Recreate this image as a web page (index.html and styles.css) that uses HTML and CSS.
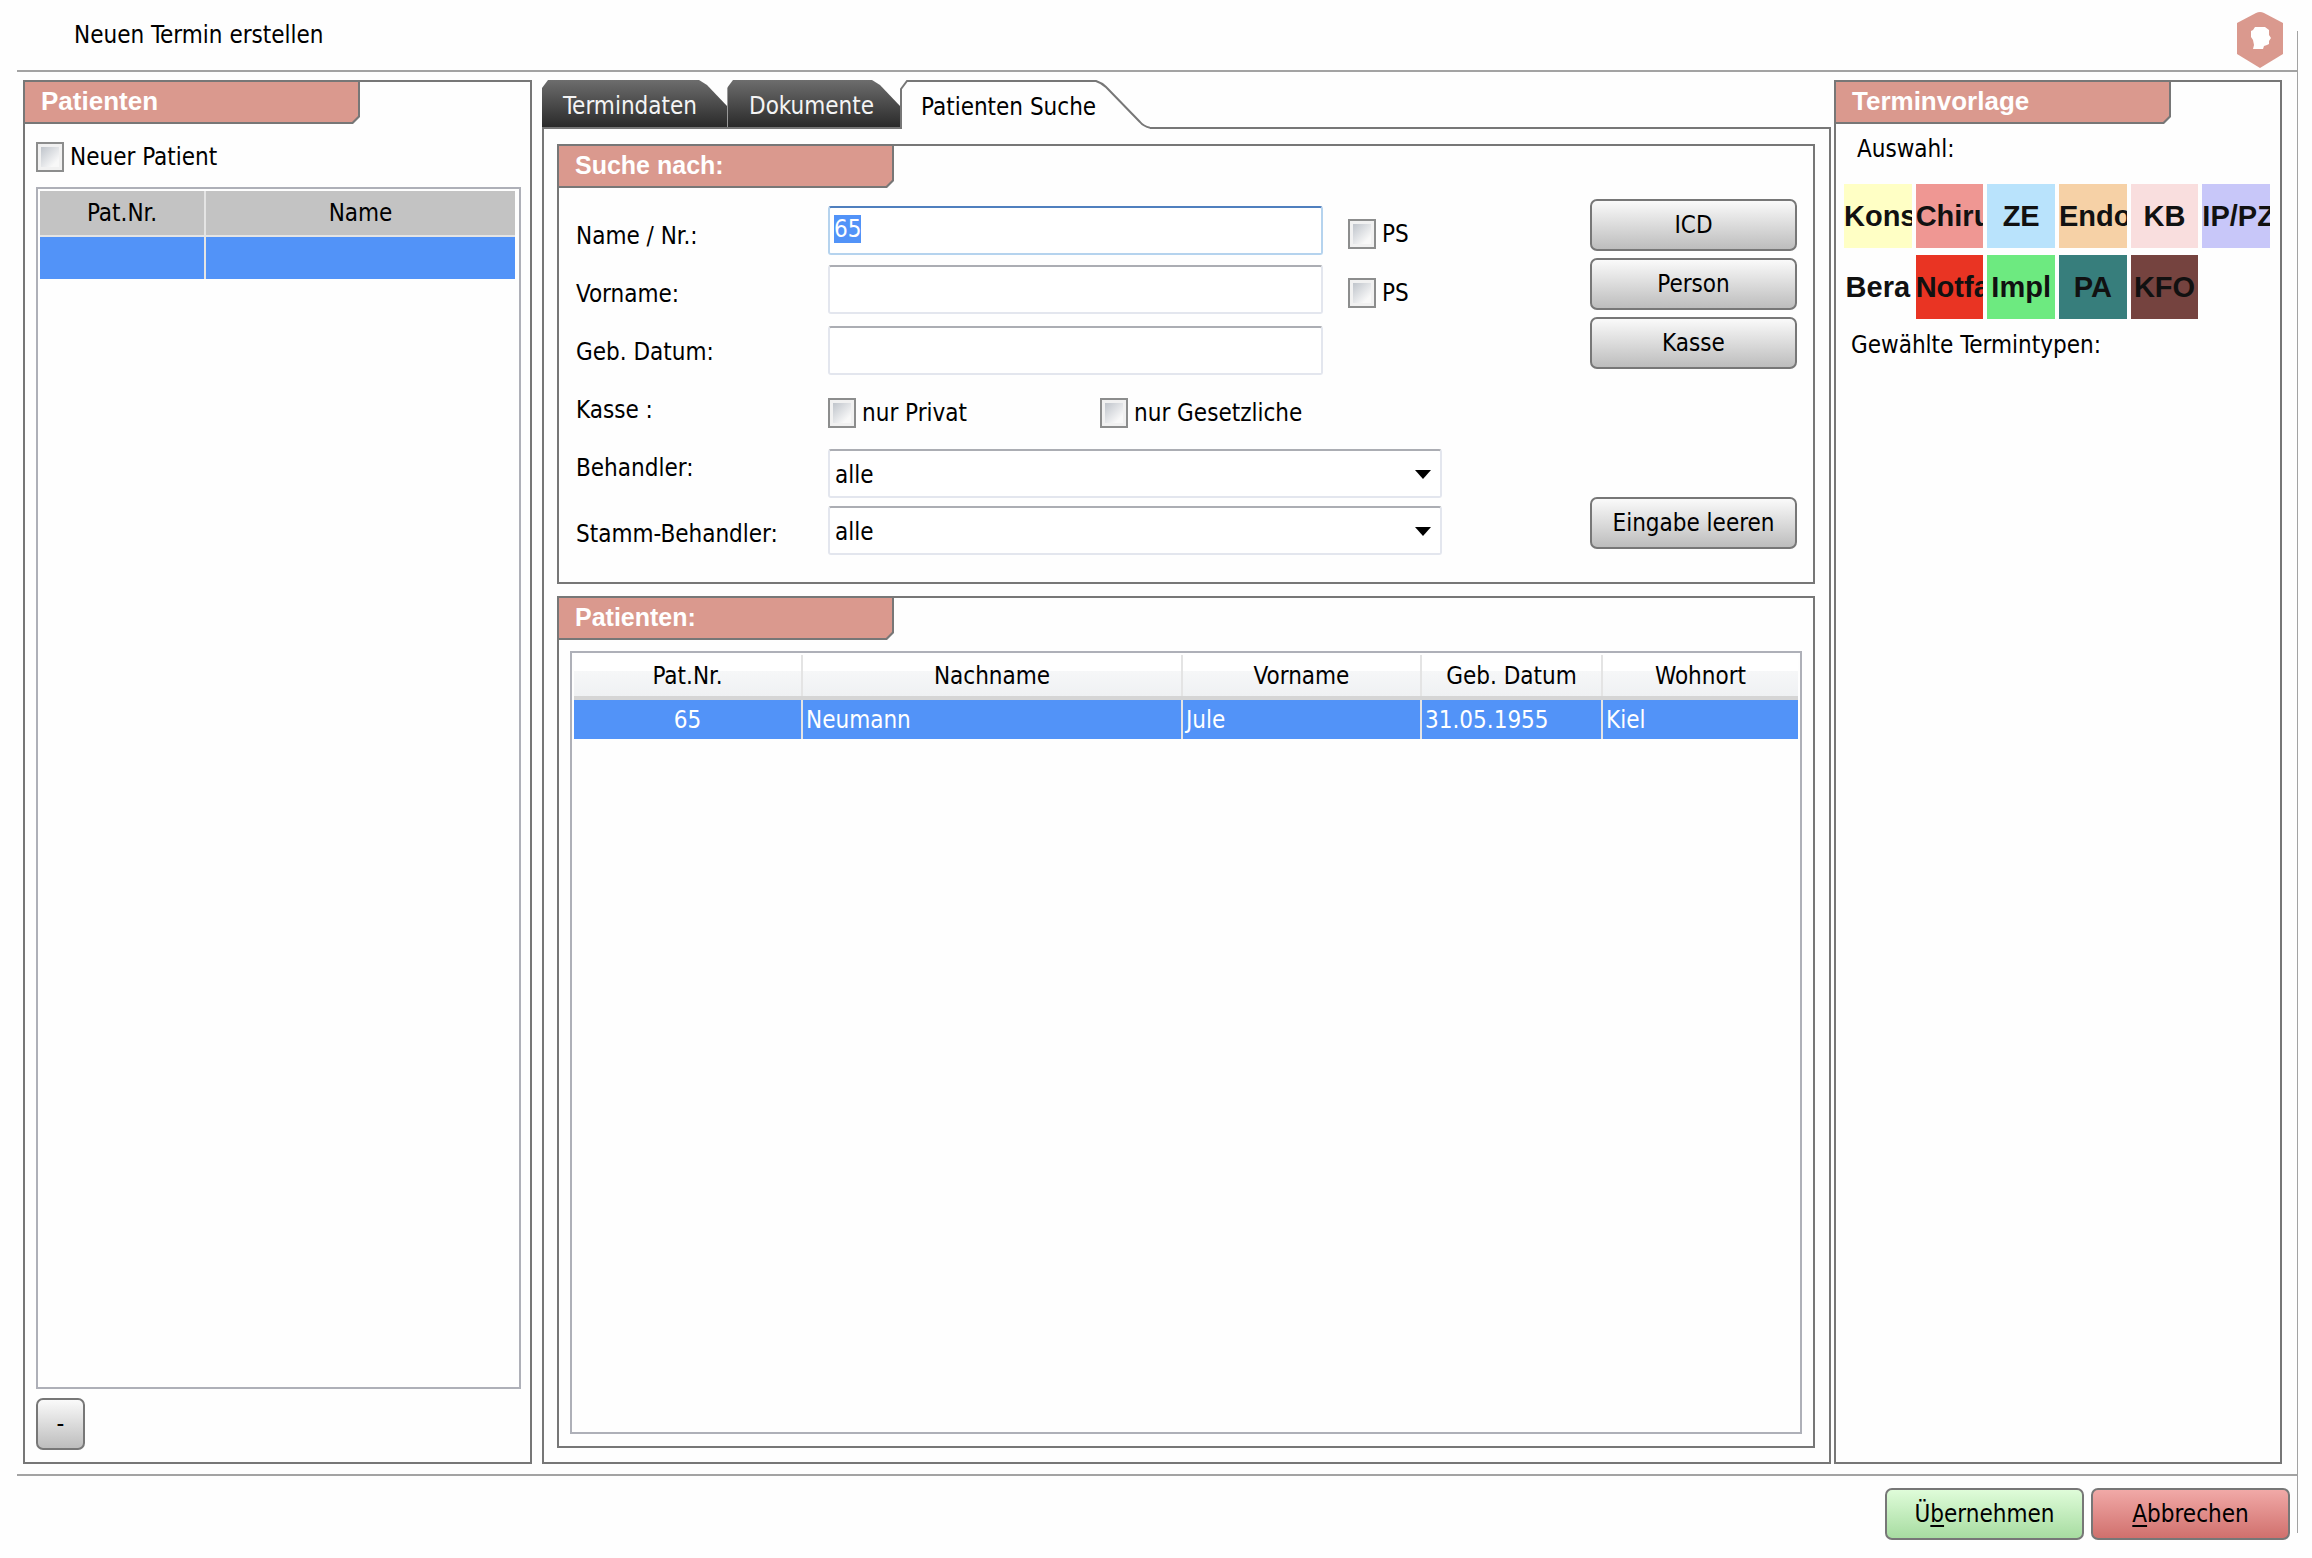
FILE: index.html
```html
<!DOCTYPE html>
<html lang="de">
<head>
<meta charset="utf-8">
<title>Neuen Termin erstellen</title>
<link rel="stylesheet" href="styles.css">
</head>
<body>
<div class="window">
  <header class="window-head">
    <h1 class="window-title">Neuen Termin erstellen</h1>
    <svg class="logo" width="48" height="56" viewBox="0 0 48 56" aria-hidden="true">
      <path fill="#da998e" d="M20 1Q24 -1 28 1L47 11V42L24 56L1 42V11Z"/>
      <path fill="#fff" d="M19 15h10l4 3v5l2 3-2 3v3l-2 1-3 1-1 3H17l1-4-1-5-2-3V19l2-1Z"/>
    </svg>
  </header>

  <main class="columns">
    <section class="panel side patients">
      <h2 class="panel-title"><span>Patienten</span></h2>
      <div class="patients-body">
        <label class="check"><input type="checkbox">Neuer Patient</label>
        <div class="frame">
          <table class="grid chosen">
            <colgroup><col class="chosen-nr"><col></colgroup>
            <thead><tr><th>Pat.Nr.</th><th>Name</th></tr></thead>
            <tbody><tr><td></td><td></td></tr></tbody>
          </table>
        </div>
        <button class="btn btn-minus" type="button">-</button>
      </div>
    </section>

    <div class="center">
      <div class="tabs" role="tablist">
        <button class="tab tab-first" type="button" role="tab">Termindaten</button>
        <button class="tab tab-second" type="button" role="tab">Dokumente</button>
        <button class="tab tab-active" type="button" role="tab" aria-selected="true">
          <svg class="tab-shape" width="250" height="49" viewBox="0 0 250 49" aria-hidden="true">
            <path fill="#fefefe" d="M1 49V9L7 1H196Q202 3 206 7L240 42Q244 47 250 48V49Z"/>
            <path fill="none" stroke="#777" stroke-width="2" d="M1 49V9L7 1H196Q202 3 206 7L240 42Q244 47 252 48"/>
          </svg>
          <span class="tab-text">Patienten Suche</span>
        </button>
      </div>
      <div class="tab-body">
        <section class="panel">
          <h2 class="panel-title"><span>Suche nach:</span></h2>
          <form class="search">
            <div class="labels">
              <label for="name">Name / Nr.:</label>
              <label for="vorname">Vorname:</label>
              <label for="geb">Geb. Datum:</label>
              <span>Kasse :</span>
              <label for="behandler">Behandler:</label>
              <label for="stamm">Stamm-Behandler:</label>
            </div>
            <div class="fields">
              <div class="field">
                <input class="text" id="name" type="text" value="65" autofocus>
                <label class="check"><input type="checkbox">PS</label>
              </div>
              <div class="field">
                <input class="text" id="vorname" type="text">
                <label class="check"><input type="checkbox">PS</label>
              </div>
              <div class="field"><input class="text" id="geb" type="text"></div>
              <div class="field kasse">
                <label class="check"><input type="checkbox">nur Privat</label>
                <label class="check"><input type="checkbox">nur Gesetzliche</label>
              </div>
              <div class="field"><span class="select"><select id="behandler"><option>alle</option></select></span></div>
              <div class="field"><span class="select"><select id="stamm"><option>alle</option></select></span></div>
            </div>
            <div class="actions">
              <button class="btn" type="button">ICD</button>
              <button class="btn" type="button">Person</button>
              <button class="btn" type="button">Kasse</button>
              <button class="btn btn-clear" type="reset">Eingabe leeren</button>
            </div>
          </form>
        </section>

        <section class="panel results">
          <h2 class="panel-title"><span>Patienten:</span></h2>
          <div class="frame">
            <table class="grid found">
              <colgroup><col class="c-nr"><col class="c-last"><col class="c-first"><col class="c-date"><col class="c-city"></colgroup>
              <thead><tr><th>Pat.Nr.</th><th>Nachname</th><th>Vorname</th><th>Geb. Datum</th><th>Wohnort</th></tr></thead>
              <tbody><tr><td class="nr">65</td><td>Neumann</td><td>Jule</td><td>31.05.1955</td><td>Kiel</td></tr></tbody>
            </table>
          </div>
        </section>
      </div>
    </div>

    <section class="panel side templates">
      <h2 class="panel-title"><span>Terminvorlage</span></h2>
      <p class="pick">Auswahl:</p>
      <div class="tiles">
        <button type="button" class="tile kons">Kons</button>
        <button type="button" class="tile chir">Chiru</button>
        <button type="button" class="tile ze">ZE</button>
        <button type="button" class="tile endo">Endo</button>
        <button type="button" class="tile kb">KB</button>
        <button type="button" class="tile ip">IP/PZ</button>
        <button type="button" class="tile bera">Bera</button>
        <button type="button" class="tile notf">Notfa</button>
        <button type="button" class="tile impl">Impl</button>
        <button type="button" class="tile pa">PA</button>
        <button type="button" class="tile kfo">KFO</button>
      </div>
      <p class="types">Gewählte Termintypen:</p>
    </section>
  </main>

  <footer class="window-foot">
    <button class="btn btn-ok" type="button"><span>Ü<u>b</u>ernehmen</span></button>
    <button class="btn btn-cancel" type="button"><span><u>A</u>bbrechen</span></button>
  </footer>
</div>
<script src="app.js"></script>
</body>
</html>
```
FILE: app.js
```js
// Start with the search term selected, ready to be overwritten.
const nameField = document.getElementById("name");
nameField.focus();
nameField.select();
```
FILE: styles.css
```css
:root {
  --line: #777;
  --rule: #a3a3a3;
  --accent: #da998e;
  --blue: #5293f8;
  --ui: "DejaVu Sans Condensed", "Roboto", sans-serif;
  --head: "Liberation Sans", Arial, sans-serif;
}

* { box-sizing: border-box; }

body {
  margin: 0;
  background: #fefefe;
  color: #000;
  font: 24px/28px var(--ui);
}

h1, h2, p { margin: 0; font-weight: normal; }

button, input, select { font: inherit; color: inherit; }

/* window */
.window {
  display: flex;
  flex-direction: column;
  min-height: 100vh;
  margin: 0 14px 0 17px;
  background: linear-gradient(var(--rule), var(--rule)) right 31px / 1px calc(100% - 56px) no-repeat;
}

.window-head {
  display: flex;
  justify-content: space-between;
  align-items: center;
  height: 72px;
  padding: 0 14px 0 57px;
  border-bottom: 2px solid var(--rule);
}

.window-title { font-size: 24px; }
.logo { margin-top: 10px; }

.columns {
  flex: 1;
  display: flex;
  padding: 8px 16px 10px 6px;
}

.window-foot {
  display: flex;
  justify-content: flex-end;
  gap: 7px;
  padding: 12px 8px 18px;
  border-top: 2px solid var(--rule);
}

/* panels */
.panel {
  display: flex;
  flex-direction: column;
  border: 2px solid var(--line);
}

.panel-title {
  width: 335px;
  height: 42px;
  padding: 0 2px 2px 0;
  background: var(--line);
  clip-path: polygon(0 0, 100% 0, 100% calc(100% - 7px), calc(100% - 7px) 100%, 0 100%);
  font: bold 25px/38px var(--head);
  color: #fff;
}

.side .panel-title { font-size: 26px; }

.panel-title span {
  display: block;
  height: 40px;
  padding-left: 16px;
  background: var(--accent);
  clip-path: polygon(0 0, 100% 0, 100% calc(100% - 6px), calc(100% - 6px) 100%, 0 100%);
}

.patients { width: 509px; margin-right: 10px; }
.center { flex: 1; display: flex; flex-direction: column; margin-right: 3px; }
.templates { width: 448px; }

.patients-body {
  flex: 1;
  display: flex;
  flex-direction: column;
  align-items: flex-start;
  padding: 18px 9px 12px 11px;
}

.patients-body .frame { align-self: stretch; margin: 15px 0 9px; padding-right: 4px; }

/* lists */
.frame {
  flex: 1;
  padding: 2px;
  border: 2px solid #aeb0b8;
}

.grid { width: 100%; table-layout: fixed; border-collapse: collapse; }
.grid th { font-weight: normal; padding: 0; }
.grid td { padding: 0 0 0 3px; background: var(--blue); color: #fff; }
.grid th + th, .grid td + td { border-left: 2px solid #e4e4e4; }

.chosen-nr { width: 165px; }
.chosen th { height: 45px; background: #c3c3c3; border-bottom: 2px solid #e4e4e4; }
.chosen td { height: 43px; }

.c-nr { width: 228px; }
.c-first { width: 239px; }
.c-date { width: 181px; }
.c-city { width: 196px; }
.found th {
  height: 43px;
  background: linear-gradient(#fff 16px, #f6f7f8 16px, #eff1f3);
  border-bottom: 4px solid #d5d5d5;
}
.found td { height: 41px; }
.found .nr { text-align: center; padding: 0; }

/* controls */
.check { display: flex; align-items: center; gap: 6px; height: 30px; }

.check input {
  appearance: none;
  width: 28px;
  height: 30px;
  margin: 0;
  padding: 3px;
  border: 2px solid #8c8d8d;
  background: linear-gradient(135deg, #bfc4cb, #f8f8f8 80%) content-box, #f1f1f1;
}

.btn {
  width: 207px;
  height: 52px;
  padding: 0;
  border: 2px solid var(--line);
  border-radius: 7px;
  background: linear-gradient(#fafafa, #bdbdbd);
}

.btn-minus { width: 49px; }
.btn-ok { width: 199px; background: linear-gradient(#dffcd9, #a7dca1); }
.btn-cancel { width: 199px; background: linear-gradient(#f1a9a7, #d0706d); }
.btn u { text-decoration-thickness: 2px; text-underline-offset: 3px; }

/* tabs */
.tabs { display: flex; height: 47px; }

.tab {
  height: 47px;
  padding: 4px 0 0 21px;
  border: 0;
  text-align: left;
  color: #f4f4f4;
  background: linear-gradient(#6d6d6d, #2a2a2a);
  clip-path: polygon(0 8px, 6px 0, calc(100% - 28px) 0, calc(100% - 20px) 5px, 100% 26px, 100% 100%, 0 100%);
}

.tab-first { width: 185px; }
.tab-second { width: 173px; border-left: 1px solid #999; }

.tab-active {
  position: relative;
  width: 250px;
  height: 49px;
  background: none;
  clip-path: none;
  color: #000;
}

.tab-shape { position: absolute; left: 0; top: 0; }
.tab-text { position: relative; }

.tab-body {
  flex: 1;
  display: flex;
  flex-direction: column;
  gap: 12px;
  padding: 15px 14px 14px 13px;
  border: 2px solid var(--line);
}

/* search form */
.search { display: flex; padding: 11px 16px 11px 17px; }

.labels {
  display: grid;
  grid-template-rows: repeat(5, 58px) 74px;
  align-items: center;
  width: 252px;
  padding-top: 8px;
}

.fields {
  flex: 1;
  display: grid;
  grid-template-rows: 59px 59px 63px 61px 61px 53px;
  align-content: start;
  padding-top: 2px;
}

.field { display: flex; align-items: center; gap: 25px; }
.field .text + .check { padding-top: 6px; }
.kasse .check { width: 247px; }

.text {
  width: 495px;
  height: 49px;
  padding: 0 4px 4px;
  border: 2px solid #e3e6ee;
  border-top-color: #abadb3;
  border-radius: 3px;
  background: #fff;
}

.text:focus {
  outline: 0;
  border-color: #b5d3ee;
  border-top-color: #4f7fbe;
}

.text::selection { background: var(--blue); color: #fff; }

.select { position: relative; width: 614px; }

.select select {
  appearance: none;
  display: block;
  width: 100%;
  height: 49px;
  padding: 2px 5px 0;
  border: 2px solid #e3e6ee;
  border-top-color: #abadb3;
  border-radius: 3px;
  background: #fff;
}

.select::after {
  content: "";
  position: absolute;
  right: 11px;
  top: 21px;
  border: 8px solid transparent;
  border-top: 9px solid #000;
  border-bottom: 0;
  pointer-events: none;
}

.actions { display: flex; flex-direction: column; gap: 7px; }
.btn-clear { margin-top: auto; margin-bottom: 22px; }

.results { flex: 1; }
.results .frame { margin: 11px 11px 12px; }

/* appointment templates */
.pick { padding: 11px 0 0 21px; }

.tiles {
  display: grid;
  grid-template-columns: repeat(6, 1fr);
  gap: 7px 4px;
  padding: 21px 10px 12px 8px;
}

.tile {
  display: flex;
  align-items: center;
  justify-content: safe center;
  min-width: 0;
  height: 64px;
  padding: 0;
  border: 0;
  overflow: hidden;
  font: bold 29px/32px var(--head);
  color: #111;
  white-space: nowrap;
}

.kons { background: #ffffc5; }
.chir { background: #ef9793; }
.ze { background: #b9e3fc; }
.endo { background: #f6d1a6; }
.kb { background: #f9dede; }
.ip { background: #c8c7f9; }
.bera { background: #fefefe; }
.notf { background: #e93423; }
.impl { background: #6dea80; }
.pa { background: #377e7c; }
.kfo { background: #75433f; }

.types { padding-left: 15px; }
```
